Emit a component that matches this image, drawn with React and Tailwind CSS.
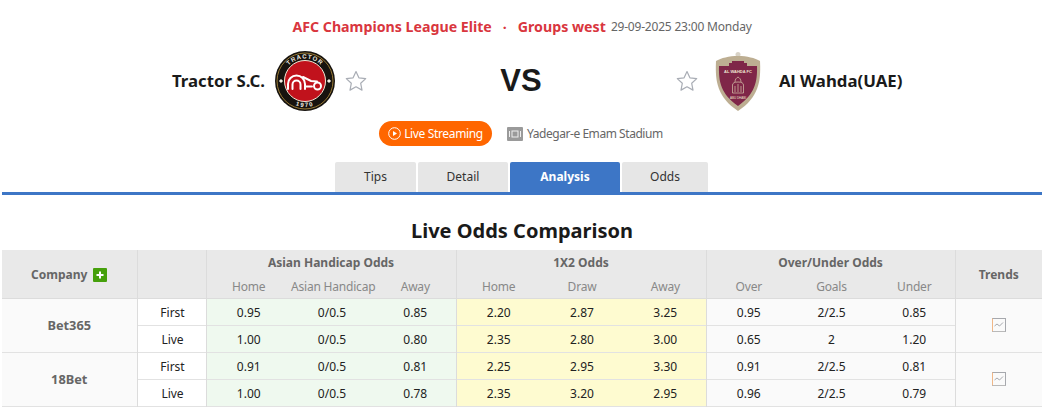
import React from 'react';

const rows = [
  {
    company: 'Bet365',
    lines: [
      ['First', '0.95', '0/0.5', '0.85', '2.20', '2.87', '3.25', '0.95', '2/2.5', '0.85'],
      ['Live', '1.00', '0/0.5', '0.80', '2.35', '2.80', '3.00', '0.65', '2', '1.20'],
    ],
  },
  {
    company: '18Bet',
    lines: [
      ['First', '0.91', '0/0.5', '0.81', '2.25', '2.95', '3.30', '0.91', '2/2.5', '0.81'],
      ['Live', '1.00', '0/0.5', '0.78', '2.35', '3.20', '2.95', '0.96', '2/2.5', '0.79'],
    ],
  },
];

const subHeads = ['Home', 'Asian Handicap', 'Away', 'Home', 'Draw', 'Away', 'Over', 'Goals', 'Under'];

function Star() {
  return (
    <svg width="22" height="22" viewBox="0 0 22 22" className="shrink-0">
      <path
        d="M11 1.500l2.900 6.300 6.800.8-5 4.700 1.300 6.800L11 16.800l-6 3.300 1.300-6.800-5-4.700 6.800-.8z"
        fill="#fff"
        stroke="#a9adb5"
        strokeWidth="1.200"
        strokeLinejoin="round"
      />
    </svg>
  );
}

function TractorLogo() {
  return (
    <svg width="60" height="60" viewBox="0 0 60 60" className="shrink-0">
      <defs>
        <path id="tractorTop" d="M7.500 30a22.500 22.500 0 0 1 45 0" />
        <path id="tractorBottom" d="M4 30a26 26 0 0 0 52 0" />
      </defs>
      <circle cx="30" cy="30" r="30" fill="#17130f" />
      <circle cx="30" cy="30" r="28" fill="none" stroke="#b8933f" strokeWidth="0.800" />
      <circle cx="30" cy="30" r="20.500" fill="#c1121c" stroke="#f2ead8" strokeWidth="1" />
      <text fontSize="6" fontWeight="700" fill="#f4efe4" letterSpacing="1" fontFamily="'Liberation Sans', sans-serif">
        <textPath href="#tractorTop" startOffset="50%" textAnchor="middle">TRACTOR</textPath>
      </text>
      <text fontSize="6" fontWeight="700" fill="#f4efe4" letterSpacing="1.500" fontFamily="'Liberation Sans', sans-serif">
        <textPath href="#tractorBottom" startOffset="50%" textAnchor="middle">1970</textPath>
      </text>
      <rect x="4.500" y="28.500" width="3" height="3" fill="#f4efe4" transform="rotate(45 6 30)" />
      <rect x="52.500" y="28.500" width="3" height="3" fill="#f4efe4" transform="rotate(45 54 30)" />
      <g fill="none" stroke="#fff" strokeWidth="2" strokeLinecap="round">
        <path d="M13 38v-5a8.500 8.500 0 0 1 17 0v5" />
        <path d="M17.500 38v-4.500a4 4 0 0 1 8 0V38" />
        <path d="M28 26l8 4 6 .5" />
        <path d="M31 35.500h6" />
        <circle cx="42.500" cy="35" r="3.500" />
      </g>
    </svg>
  );
}

function WahdaLogo() {
  return (
    <svg width="46" height="60" viewBox="0 0 46 60" className="shrink-0">
      <circle cx="23" cy="3.500" r="2.500" fill="#d8d2c6" />
      <path d="M23 5C14 5 6 7 1 10c-1 20 1 36 22 50 21-14 23-30 22-50C40 7 32 5 23 5z" fill="#bdae92" />
      <path d="M4 15h10v-3h3v-2h12v2h3v3h10c.5 16-2 28-19 40C6 43 3.500 31 4 15z" fill="#7f2648" />
      <text x="23" y="22" textAnchor="middle" fontSize="4" fontWeight="700" fill="#eee3d0" fontFamily="'Liberation Sans', sans-serif">
        AL WAHDA FC
      </text>
      <g fill="none" stroke="#d9c9ae" strokeWidth="0.700">
        <path d="M17.500 42v-8c0-2 2-3 5.500-3s5.500 1 5.500 3v8z" />
        <path d="M20 31c0-3 1.500-4 3-5 1.500 1 3 2 3 5" />
        <path d="M23 33v8M20 35v6M26 35v6" />
      </g>
      <text x="23" y="47.500" textAnchor="middle" fontSize="3" fill="#eee3d0" fontFamily="'Liberation Sans', sans-serif">
        ABU DHABI
      </text>
    </svg>
  );
}

function TrendIcon() {
  return (
    <svg width="14" height="14" viewBox="0 0 14 14" className="mx-auto block">
      <rect x="0.500" y="0.500" width="13" height="13" fill="#fafafa" stroke="#a6a8ad" />
      <path d="M0.500 0.500v13" stroke="#f0b787" />
      <path d="M0.500 13.500h13" stroke="#b9b9b9" />
      <path d="M2.500 8l2.500-2 2.500 2 3.500-3.500" fill="none" stroke="#a6a8ad" />
    </svg>
  );
}

function Tab({ label, width, active }) {
  return (
    <div
      className={
        active
          ? 'h-[30px] rounded-t-[2px] bg-[#3d76c6] text-white font-bold flex items-center justify-center ' + width
          : 'h-[30px] rounded-t-[2px] bg-[#e6e6e6] text-[#333] flex items-center justify-center ' + width
      }
    >
      {label}
    </div>
  );
}

export default function App() {
  return (
    <div
      className="w-[1044px] h-[408px] overflow-hidden bg-white text-[12px] text-[#222]"
      style={{ fontFamily: "'Noto Sans', 'DejaVu Sans', sans-serif" }}
    >
      <div className="pt-[17px] h-[20px] box-content flex items-center justify-center">
        <span className="text-[14.2px] font-bold text-[#d9363e]">AFC Champions League Elite</span>
        <span className="text-[14px] font-bold text-[#d9363e] mx-[11px]">·</span>
        <span className="text-[14.2px] font-bold text-[#d9363e]">Groups west</span>
        <span className="ml-[5px] text-[#666] tracking-[-0.2px]">29-09-2025 23:00 Monday</span>
      </div>

      <div className="mt-[14px] h-[60px] flex items-center">
        <div className="w-[367px] flex items-center justify-end">
          <span className="text-[16.800px] font-bold text-[#1a1a1a]">Tractor S.C.</span>
          <div className="ml-[10px]"><TractorLogo /></div>
          <div className="ml-[10px]"><Star /></div>
        </div>
        <div
          className="flex-1 text-center text-[31px] font-bold text-[#1a1a1a] pr-[1px]"
          style={{ fontFamily: "'Liberation Sans', sans-serif" }}
        >
          VS
        </div>
        <div className="w-[368px] flex items-center">
          <Star />
          <div className="ml-[17px]"><WahdaLogo /></div>
          <span className="ml-[18px] text-[16.800px] font-bold text-[#1a1a1a]">Al Wahda(UAE)</span>
        </div>
      </div>

      <div className="mt-[10px] h-[25px] flex items-center pl-[379px]">
        <div className="w-[113px] h-[25px] rounded-full bg-[#ff6600] text-white flex items-center justify-center gap-[3px] tracking-[-0.35px]">
          <svg width="13" height="13" viewBox="0 0 13 13">
            <circle cx="6.500" cy="6.500" r="5.800" fill="none" stroke="#fff" strokeWidth="1" />
            <path d="M5 4v5l4-2.500z" fill="#fff" />
          </svg>
          Live Streaming
        </div>
        <svg width="16" height="14" viewBox="0 0 16 14" className="ml-[15px]">
          <rect width="16" height="14" y="0" rx="1" fill="#9a9a9a" />
          <rect x="5" y="4" width="6" height="6" fill="none" stroke="#eee" />
          <path d="M2.500 4v6M13.500 4v6" stroke="#eee" />
        </svg>
        <span className="ml-[4px] text-[#666] tracking-[-0.45px]">Yadegar-e Emam Stadium</span>
      </div>

      <div className="mt-[16px] mx-[2px] border-b-[3px] border-[#3d76c6] pl-[333px] flex gap-[2px]">
        <Tab label="Tips" width="w-[81px]" />
        <Tab label="Detail" width="w-[90px]" />
        <Tab label="Analysis" width="w-[110px]" active />
        <Tab label="Odds" width="w-[86px]" />
      </div>

      <h2 className="mt-[21px] h-[30px] text-center text-[20px] leading-[30px] font-bold text-[#1a1a1a]">
        Live Odds Comparison
      </h2>

      <table className="mt-[4px] mx-[2px] w-[1040px] table-fixed border-collapse text-center">
        <colgroup>
          <col className="w-[135px]" />
          <col className="w-[69px]" />
          <col className="w-[83px]" />
          <col className="w-[84px]" />
          <col className="w-[83px]" />
          <col className="w-[83px]" />
          <col className="w-[84px]" />
          <col className="w-[83px]" />
          <col className="w-[83px]" />
          <col className="w-[83px]" />
          <col className="w-[83px]" />
          <col className="w-[87px]" />
        </colgroup>
        <thead>
          <tr className="h-[25px] bg-[#e9e9e9] text-[#666] font-bold">
            <th rowSpan="2" className="pt-[2px] border-r border-b border-[#dcdcdc]">
              <span className="inline-flex items-center gap-[6px]">
                Company
                <span className="w-[14px] h-[14px] rounded-[1px] bg-[#46a00c] text-white flex items-center justify-center">
                  <svg width="8" height="8" viewBox="0 0 8 8">
                    <path d="M4 0.500v7M0.500 4h7" stroke="#fff" strokeWidth="2" />
                  </svg>
                </span>
              </span>
            </th>
            <th rowSpan="2" className="border-r border-b border-[#dcdcdc]"></th>
            <th colSpan="3" className="border-r border-[#dcdcdc]">Asian Handicap Odds</th>
            <th colSpan="3" className="border-r border-[#dcdcdc]">1X2 Odds</th>
            <th colSpan="3" className="border-r border-[#dcdcdc]">Over/Under Odds</th>
            <th rowSpan="2" className="pt-[2px] border-b border-[#dcdcdc]">Trends</th>
          </tr>
          <tr className="h-[23px] bg-[#e9e9e9] text-[#888]">
            {subHeads.map((h, i) => (
              <th
                key={i}
                className={
                  i % 3 === 2
                    ? 'pt-[2px] pl-[2px] font-normal whitespace-nowrap tracking-[-0.2px] border-b border-r border-[#dcdcdc]'
                    : 'pt-[2px] pl-[2px] font-normal whitespace-nowrap tracking-[-0.2px] border-b border-[#dcdcdc]'
                }
              >
                {h}
              </th>
            ))}
          </tr>
        </thead>
        <tbody>
          {rows.map((row) =>
            row.lines.map((line, i) => (
              <tr key={row.company + i} className="h-[27px] border-b border-[#e2e2e2]">
                {i === 0 && (
                  <td rowSpan="2" className="pt-[2px] bg-[#fafafa] border-r border-[#dcdcdc] text-[12.800px] font-bold text-[#666]">
                    {row.company}
                  </td>
                )}
                <td className="pt-[2px] pl-[2px] bg-white border-r border-[#dcdcdc]">{line[0]}</td>
                {line.slice(1, 4).map((v, j) => (
                  <td key={j} className={j === 2 ? 'pt-[2px] pl-[2px] bg-[#eff9ef] border-r border-[#dcdcdc]' : 'pt-[2px] pl-[2px] bg-[#eff9ef]'}>
                    {v}
                  </td>
                ))}
                {line.slice(4, 7).map((v, j) => (
                  <td key={j} className={j === 2 ? 'pt-[2px] pl-[2px] bg-[#fefbd0] border-r border-[#dcdcdc]' : 'pt-[2px] pl-[2px] bg-[#fefbd0]'}>
                    {v}
                  </td>
                ))}
                {line.slice(7, 10).map((v, j) => (
                  <td key={j} className={j === 2 ? 'pt-[2px] pl-[2px] bg-[#fafafa] border-r border-[#dcdcdc]' : 'pt-[2px] pl-[2px] bg-[#fafafa]'}>
                    {v}
                  </td>
                ))}
                {i === 0 && (
                  <td rowSpan="2" className="bg-[#fafafa]">
                    <TrendIcon />
                  </td>
                )}
              </tr>
            ))
          )}
        </tbody>
      </table>
    </div>
  );
}
